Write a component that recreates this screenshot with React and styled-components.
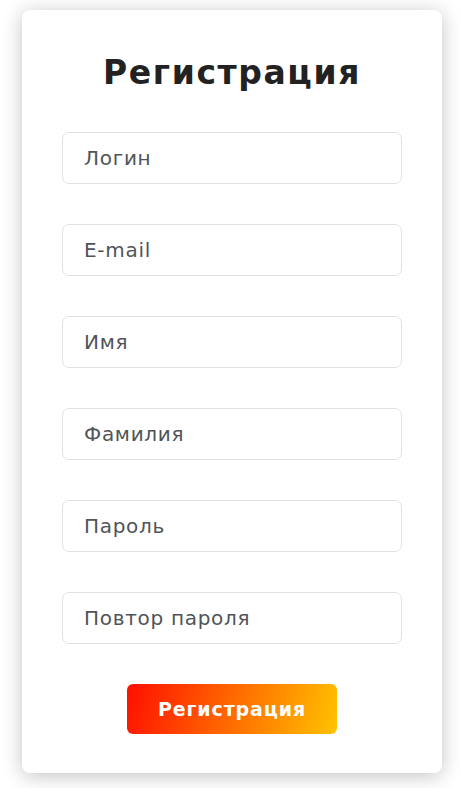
import React from 'react';
import styled, { createGlobalStyle } from 'styled-components';

const GlobalStyle = createGlobalStyle`
  body {
    margin: 0;
    background: #fff;
    font-family: "DejaVu Sans", "Noto Sans", sans-serif;
  }
  * { box-sizing: border-box; }
`;

const Page = styled.div`
  padding: 10px 18px 15px 22px;
`;

const Card = styled.form`
  width: 420px;
  background: #fff;
  border-radius: 8px;
  box-shadow: 0 3px 20px rgba(0, 0, 0, 0.24);
  padding: 43px 40px 39px;
  display: flex;
  flex-direction: column;
  align-items: center;
`;

const Title = styled.h1`
  margin: 0 0 39px;
  font-size: 33px;
  line-height: 40px;
  font-weight: 700;
  color: #222;
  letter-spacing: 1.6px;
`;

const Fields = styled.div`
  width: 100%;
  display: flex;
  flex-direction: column;
  gap: 40px;
`;

const Input = styled.input`
  width: 100%;
  height: 52px;
  border: 1px solid #dfe2e5;
  border-radius: 7px;
  padding: 0 21px;
  font-family: inherit;
  font-size: 20px;
  letter-spacing: 0.7px;
  color: #333;
  outline: none;
  background: #fff;

  &::placeholder {
    color: #505458;
  }
`;

const Submit = styled.button`
  margin-top: 40px;
  width: 210px;
  height: 50px;
  border: none;
  border-radius: 6px;
  background: linear-gradient(105deg, #ff0f00 0%, #ff6a00 50%, #ffc300 100%);
  color: #fff;
  font-family: inherit;
  font-size: 19px;
  font-weight: 700;
  letter-spacing: 0.9px;
  cursor: pointer;
`;

const fields = [
  { name: 'login', type: 'text', placeholder: 'Логин' },
  { name: 'email', type: 'email', placeholder: 'E-mail' },
  { name: 'name', type: 'text', placeholder: 'Имя' },
  { name: 'surname', type: 'text', placeholder: 'Фамилия' },
  { name: 'password', type: 'password', placeholder: 'Пароль' },
  { name: 'password2', type: 'password', placeholder: 'Повтор пароля' },
];

export default function App() {
  return (
    <>
      <GlobalStyle />
      <Page>
        <Card onSubmit={e => e.preventDefault()}>
          <Title>Регистрация</Title>
          <Fields>
            {fields.map(f => (
              <Input key={f.name} name={f.name} type={f.type} placeholder={f.placeholder} />
            ))}
          </Fields>
          <Submit type="submit">Регистрация</Submit>
        </Card>
      </Page>
    </>
  );
}
